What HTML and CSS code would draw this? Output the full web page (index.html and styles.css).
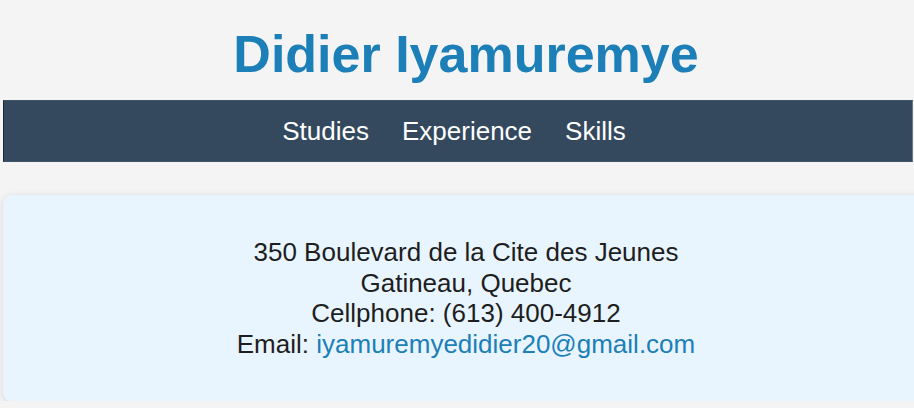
FILE: index.html
```html
<!DOCTYPE html>
<html lang="en">
<head>
<meta charset="utf-8">
<title>Didier Iyamuremye</title>
<link rel="stylesheet" href="styles.css">
</head>
<body>
<div class="page">
  <header class="site-header">
    <h1 class="name">Didier Iyamuremye</h1>
  </header>
  <nav class="nav">
    <a class="nav-link" href="#studies">Studies</a>
    <a class="nav-link" href="#experience">Experience</a>
    <a class="nav-link" href="#skills">Skills</a>
  </nav>
  <section class="card">
    <div class="line">350 Boulevard de la Cite des Jeunes</div>
    <div class="line">Gatineau, Quebec</div>
    <div class="line">Cellphone: (613) 400-4912</div>
    <div class="line">Email: <a class="mail" href="mailto:iyamuremyedidier20@gmail.com">iyamuremyedidier20@gmail.com</a></div>
  </section>
</div>
</body>
</html>
```

FILE: styles.css
```css
html, body {
  margin: 0;
  padding: 0;
  overflow: hidden;
}

body {
  background: #f4f4f4;
  font-family: "Liberation Sans", Arial, sans-serif;
  color: #222;
}

.page {
  width: 926px;
  margin-left: 3px;
  display: flex;
  flex-direction: column;
}

.site-header {
  padding-top: 24px;
  padding-bottom: 16px;
  text-align: center;
}

.name {
  margin: 0;
  font-size: 52px;
  font-weight: bold;
  line-height: 60px;
  color: #1c7fb7;
}

.nav {
  box-sizing: border-box;
  width: 910px;
  height: 62px;
  background: #34495e;
  border: 1px solid #3f5468;
  border-left-color: #1d2734;
  border-right-color: #6b7b8b;
  padding: 0 8px 0 0;
  display: flex;
  justify-content: center;
  align-items: center;
  gap: 33px;
}

.nav-link {
  color: #ffffff;
  text-decoration: none;
  font-size: 26px;
  line-height: 30px;
}

.card {
  margin-top: 33px;
  background: #e8f5ff;
  border-radius: 8px;
  box-shadow: 0 1px 6px rgba(0, 0, 0, 0.12);
  padding: 42px 0 41px;
  text-align: center;
  font-size: 26px;
  line-height: 30.67px;
  color: #1e1e1e;
}

.mail {
  color: #1c7fb7;
  text-decoration: none;
}
```
